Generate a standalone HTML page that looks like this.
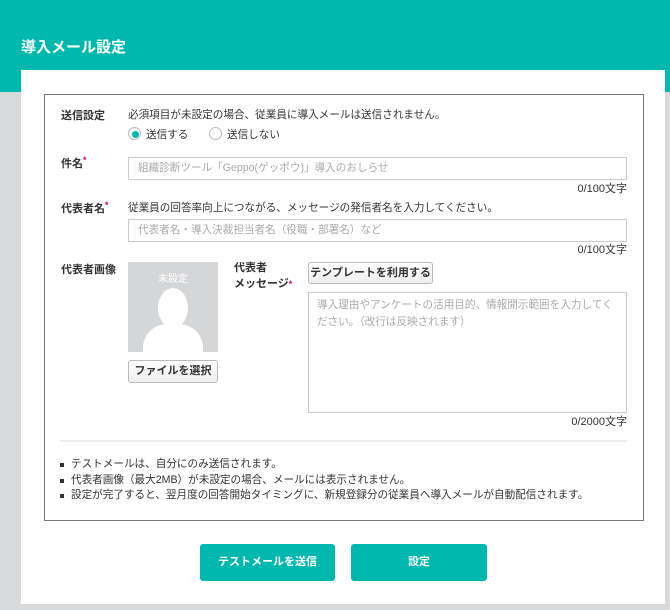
<!DOCTYPE html>
<html><head><meta charset="utf-8"><style>
*{margin:0;padding:0;box-sizing:border-box}
body{width:670px;height:610px;overflow:hidden;background:#d9dadb;font-family:"Liberation Sans","Noto Sans CJK JP",sans-serif;font-size:10.6px;color:#333;position:relative}
.a{position:absolute;white-space:nowrap}
.hdr{left:0;top:0;width:670px;height:92px;background:#00b8ad}
.title{left:21px;top:36px;font-size:15px;font-weight:bold;color:#fff}
.card{left:21px;top:70px;width:644px;height:534px;background:#fff}
.box{left:44px;top:94px;width:600px;height:427px;border:1px solid #777}
.lbl{font-weight:bold;font-size:11px;color:#333}
.req{color:#e5004f;font-size:9px;vertical-align:top}
.inp{border:1px solid #ccc;background:#fff;color:#aaa;padding-left:9px;line-height:21px;font-size:10.6px}
.cnt{font-size:11px;color:#333;text-align:right}
.btn{border:1px solid #bbb;border-radius:3px;background:linear-gradient(#fff,#eee);font-size:11px;font-weight:bold;color:#333;text-align:center}
.gb{background:#00b8ad;color:#fff;font-weight:bold;font-size:11px;text-align:center;line-height:37px;border-radius:3px}
.radio{width:13px;height:13px;border:1px solid #bbb;border-radius:50%;background:#fff}
.bl{position:relative;padding-left:11px}
.bl:before{content:"";position:absolute;left:0;top:6px;width:4px;height:4px;background:#333}
</style></head><body>
<div class="a hdr"></div>
<div class="a title">導入メール設定</div>
<div class="a card"></div>
<div class="a box"></div>

<div class="a lbl" style="left:61px;top:107px">送信設定</div>
<div class="a" style="left:128px;top:107px">必須項目が未設定の場合、従業員に導入メールは送信されません。</div>
<div class="a radio" style="left:128px;top:127px"></div>
<div class="a" style="left:132px;top:131px;width:7px;height:7px;border-radius:50%;background:#00b8ad"></div>
<div class="a" style="left:146px;top:127px">送信する</div>
<div class="a radio" style="left:209px;top:127px"></div>
<div class="a" style="left:227px;top:127px">送信しない</div>

<div class="a lbl" style="left:61px;top:155px">件名<span class="req">*</span></div>
<div class="a inp" style="left:128px;top:157px;width:499px;height:23px">組織診断ツール「Geppo(ゲッポウ)」導入のおしらせ</div>
<div class="a cnt" style="left:527px;top:180px;width:100px">0/100文字</div>

<div class="a lbl" style="left:61px;top:200px">代表者名<span class="req">*</span></div>
<div class="a" style="left:128px;top:200px">従業員の回答率向上につながる、メッセージの発信者名を入力してください。</div>
<div class="a inp" style="left:128px;top:219px;width:499px;height:23px">代表者名・導入決裁担当者名（役職・部署名）など</div>
<div class="a cnt" style="left:527px;top:241px;width:100px">0/100文字</div>

<div class="a lbl" style="left:61px;top:261px">代表者画像</div>
<div class="a" style="left:128px;top:262px;width:90px;height:90px;background:#d5d6d8;overflow:hidden">
 <div class="a" style="left:0;top:8px;width:90px;text-align:center;color:#fff;font-size:10px">未設定</div>
 <div class="a" style="left:30px;top:26px;width:30px;height:40px;border-radius:50%;background:#fff"></div>
 <div class="a" style="left:15px;top:62px;width:60px;height:50px;border-radius:24px 24px 0 0;background:#fff"></div>
</div>
<div class="a btn" style="left:128px;top:360px;width:90px;height:23px;line-height:21px">ファイルを選択</div>

<div class="a lbl" style="left:234px;top:260px;line-height:16px">代表者<br>メッセージ<span class="req">*</span></div>
<div class="a btn" style="left:308px;top:262px;width:125px;height:22px;line-height:20px">テンプレートを利用する</div>
<div class="a" style="left:308px;top:292px;width:319px;height:121px;border:1px solid #ccc;color:#aaa;padding:4px 8px;line-height:17px;white-space:normal">導入理由やアンケートの活用目的、情報開示範囲を入力してください。（改行は反映されます）</div>
<div class="a cnt" style="left:527px;top:413px;width:100px">0/2000文字</div>

<div class="a" style="left:60px;top:440px;width:567px;height:2px;background:#eee"></div>
<div class="a" style="left:60px;top:457px;line-height:15.5px;font-size:10.6px">
<div class="bl">テストメールは、自分にのみ送信されます。</div>
<div class="bl">代表者画像（最大2MB）が未設定の場合、メールには表示されません。</div>
<div class="bl">設定が完了すると、翌月度の回答開始タイミングに、新規登録分の従業員へ導入メールが自動配信されます。</div>
</div>

<div class="a gb" style="left:200px;top:544px;width:135px;height:37px">テストメールを送信</div>
<div class="a gb" style="left:351px;top:544px;width:136px;height:37px">設定</div>
</body></html>
